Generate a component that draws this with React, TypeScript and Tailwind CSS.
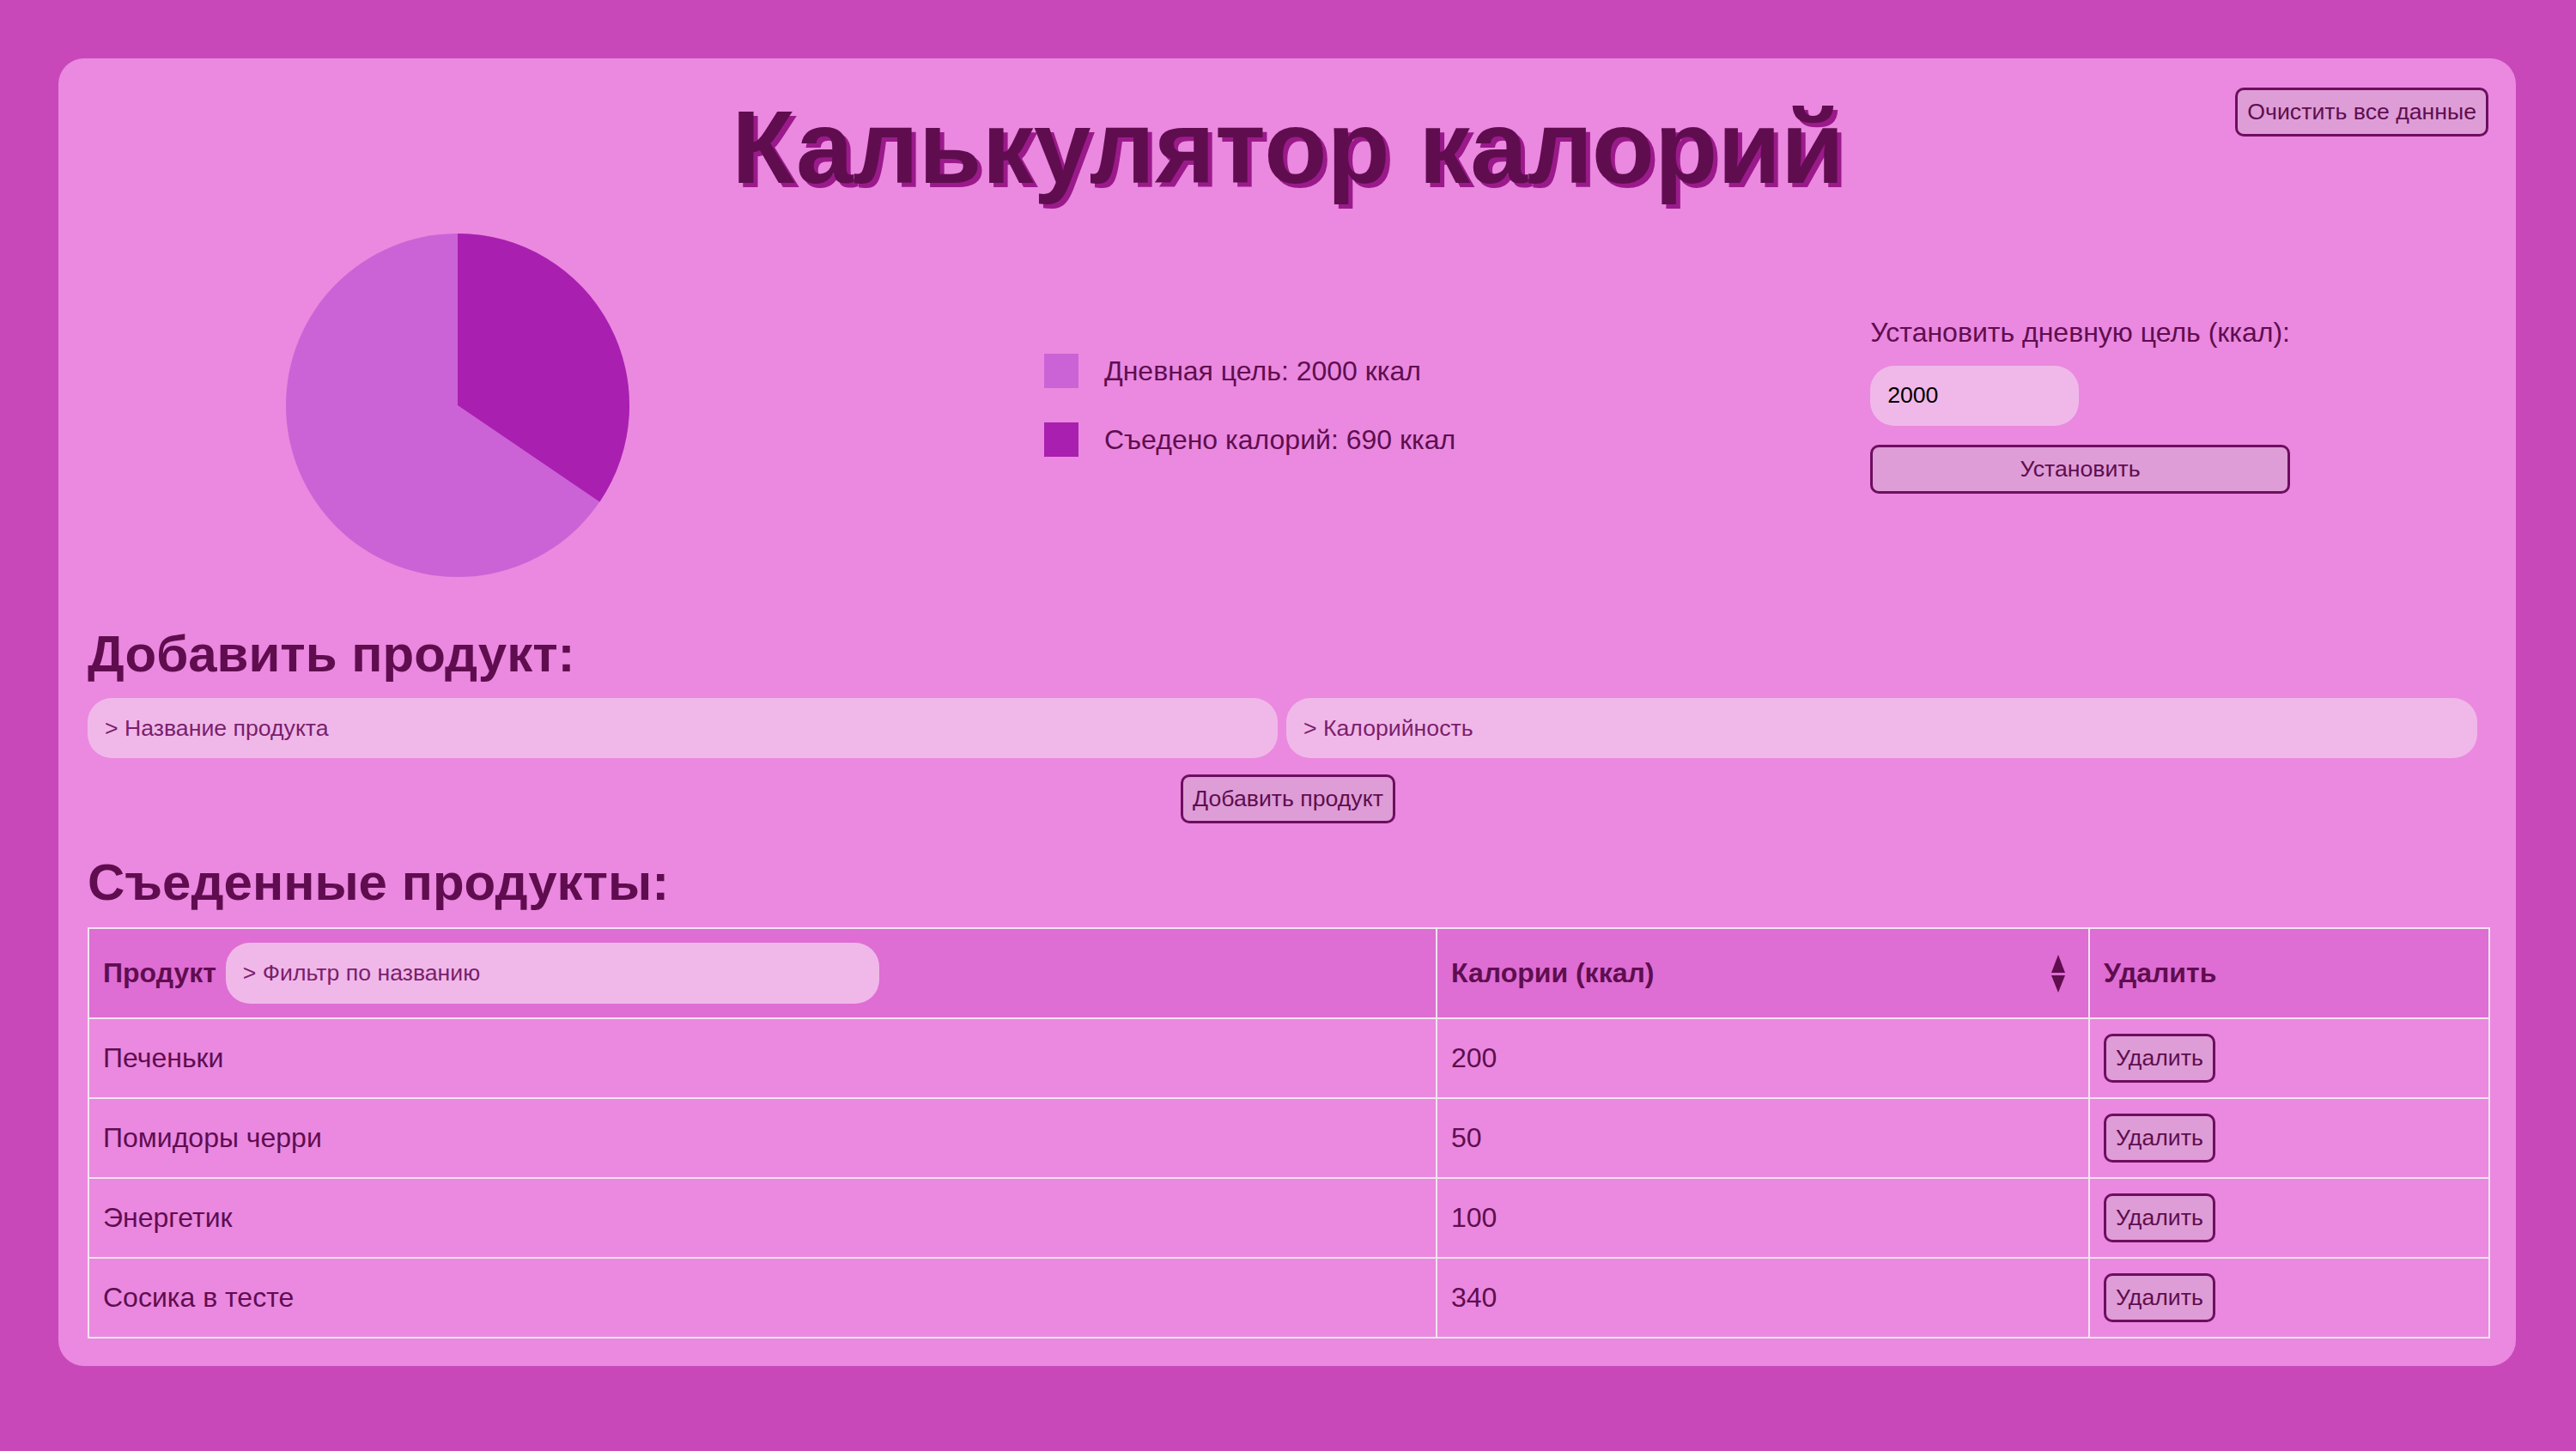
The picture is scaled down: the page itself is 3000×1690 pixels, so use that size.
import { useState } from 'react';

/* --- Data --- */
type Product = { name: string; kcal: number };

const initialProducts: Product[] = [
	{ name: 'Печеньки', kcal: 200 },
	{ name: 'Помидоры черри', kcal: 50 },
	{ name: 'Энергетик', kcal: 100 },
	{ name: 'Сосика в тесте', kcal: 340 },
];

const btnCls =
	'rounded-[10px] border-[3px] border-[#6e0e5f] bg-[#de9dd6] px-[11px] py-[10px] text-[26.67px] font-normal leading-[31px] text-[#600d50]';

const inputCls =
	'h-[70px] rounded-[28px] bg-[#f0b8e9] px-[20px] text-[26.67px] font-normal text-black outline-none placeholder:text-[#7a1f6c]';

/* --- Pie chart --- */
const Pie = ({ goal, eaten }: { goal: number; eaten: number }) => {
	const a = Math.min(eaten / goal, 0.9999) * 2 * Math.PI;
	const x = 200 + 200 * Math.sin(a);
	const y = 200 - 200 * Math.cos(a);
	const large = a > Math.PI ? 1 : 0;

	return (
		<svg width="400" height="400" viewBox="0 0 400 400" className="shrink-0">
			<circle cx="200" cy="200" r="200" fill="#cb63d6" />
			<path d={`M200,200 L200,0 A200,200 0 ${large} 1 ${x},${y} Z`} fill="#a91fb0" />
		</svg>
	);
};

/* --- App --- */
export default function App() {
	const [products] = useState(initialProducts);
	const goal = 2000;
	const eaten = products.reduce((s, p) => s + p.kcal, 0);

	return (
		<div className="min-h-screen bg-[#c848ba] pt-[68px] pl-[68px] pr-[70px] font-['Liberation_Sans',Arial,sans-serif] text-[#600d50]">
			<div className="relative rounded-[30px] bg-[#ea89df] pt-[34px] pb-[32px] pl-[34px] pr-[32px]">
				<button className={`absolute top-[34px] right-[32px] ${btnCls}`}>Очистить все данные</button>

				<h1 className="text-center text-[120px] font-bold leading-[1.15] text-[#600d50] [text-shadow:5px_5px_0_#9b1a8b]">
					Калькулятор калорий
				</h1>

				<div className="mt-[32px] flex h-[400px] items-center justify-between px-[231px]">
					<Pie goal={goal} eaten={eaten} />

					<div className="flex flex-col gap-[40px] text-[32px] leading-[1.15]">
						<div className="flex items-center gap-[30px]">
							<span className="h-[40px] w-[40px] bg-[#cb63d6]" />
							<span>Дневная цель: {goal} ккал</span>
						</div>
						<div className="flex items-center gap-[30px]">
							<span className="h-[40px] w-[40px] bg-[#a91fb0]" />
							<span>Съедено калорий: {eaten} ккал</span>
						</div>
					</div>

					<div className="flex flex-col">
						<label className="text-[32px] leading-[1.15]">Установить дневную цель (ккал):</label>
						<input className={`mt-[20px] w-[243px] ${inputCls}`} defaultValue="2000" />
						<button className={`mt-[22px] w-full ${btnCls}`}>Установить</button>
					</div>
				</div>

				<h2 className="mt-[55px] text-[60px] font-bold leading-[1.15]">Добавить продукт:</h2>
				<div className="mt-[17px] flex gap-[10px]">
					<input className={`w-[1386px] ${inputCls}`} placeholder="> Название продукта" />
					<input className={`w-[1387px] ${inputCls}`} placeholder="> Калорийность" />
				</div>
				<div className="mt-[19px] flex justify-center">
					<button className={btnCls}>Добавить продукт</button>
				</div>

				<h2 className="mt-[34px] text-[60px] font-bold leading-[1.15]">Съеденные продукты:</h2>
				<table className="mt-[18px] w-full table-fixed border-collapse text-left text-[32px] leading-[1.15]">
					<thead>
						<tr className="bg-[#de6ed3]">
							<th className="w-[1570px] border-2 border-[#f0e4ef] p-[16px] font-bold">
								<div className="flex items-center gap-[11px]">
									<span>Продукт</span>
									<input className={`h-[71px] w-[761px] ${inputCls}`} placeholder="> Фильтр по названию" />
								</div>
							</th>
							<th className="w-[760px] border-2 border-[#f0e4ef] p-[16px] font-bold">
								<div className="flex items-center justify-between">
									<span>Калории (ккал)</span>
									<svg width="20" height="44" viewBox="0 0 20 44" className="mr-[9px]">
										<path d="M10 0 L18 21 L2 21 Z" fill="#600d50" />
										<path d="M2 24 L18 24 L10 44 Z" fill="#600d50" />
									</svg>
								</div>
							</th>
							<th className="w-[466px] border-2 border-[#f0e4ef] p-[16px] font-bold">Удалить</th>
						</tr>
					</thead>
					<tbody>
						{products.map((p, i) => (
							<tr key={i}>
								<td className="border-2 border-[#f0e4ef] px-[16px] py-[17px]">{p.name}</td>
								<td className="border-2 border-[#f0e4ef] px-[16px] py-[17px]">{p.kcal}</td>
								<td className="border-2 border-[#f0e4ef] px-[16px] py-[17px]">
									<button className={btnCls}>Удалить</button>
								</td>
							</tr>
						))}
					</tbody>
				</table>
			</div>
		</div>
	);
}
